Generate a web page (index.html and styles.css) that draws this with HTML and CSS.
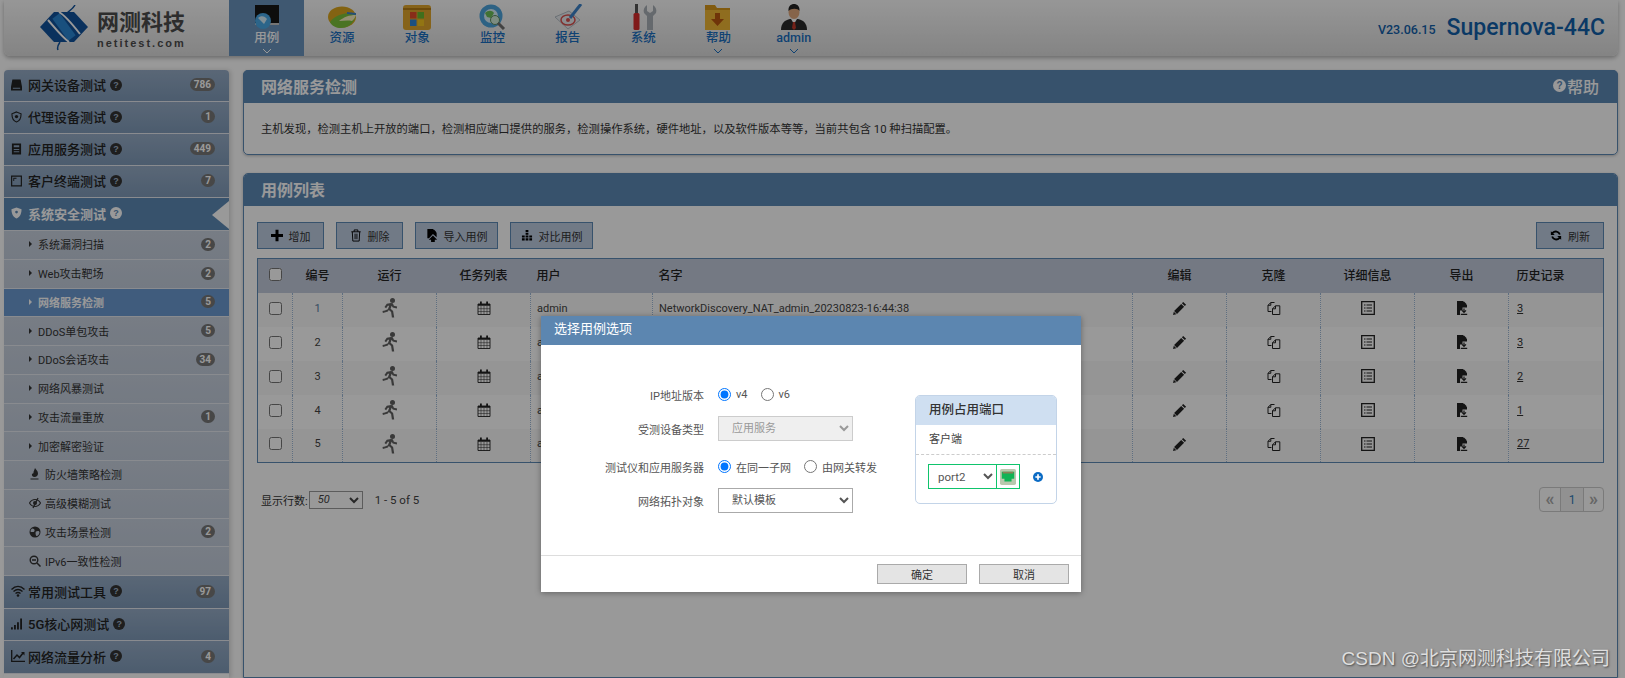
FILE: index.html
```html
<!DOCTYPE html>
<html lang="zh-CN">
<head>
<meta charset="utf-8">
<title>网络服务检测</title>
<link rel="stylesheet" href="styles.css">
</head>
<body>
<svg class="defs" aria-hidden="true">
  <symbol id="i-run" viewBox="0 0 16 20"><circle cx="10.500" cy="2.500" r="2.500"/><path d="M9 5 4.800 5.800 2.500 9l1.600 1.200 1.800-2.400 1.300-.1-1.300 3.600-3 1.300L.5 13l.4 2 5-1.600.9-1.300 2.300 2 .8 5.400h2.300l-1.100-6.600-2.500-2.200 1-2.900 1.200 1.700 4 .9.3-1.900-3.200-.7L10.800 5.300z"/></symbol>
  <symbol id="i-cal" viewBox="0 0 14 14"><path d="M1 3h12v10.500H1z" fill="none" stroke="currentColor" stroke-width=".9"/><path d="M1 3h12v1.800H1zM3 .5h1.800v3H3zM9.200 .5H11v3H9.200z"/><path d="M4 5v8.500M7 5v8.500M10 5v8.500M1 7.700h12M1 10.500h12" fill="none" stroke="currentColor" stroke-width=".5"/></symbol>
  <symbol id="i-pen" viewBox="0 0 14 14"><path d="M10.200 .9 13.100 3.800 11.800 5.100 8.900 2.200zM8.200 2.900 11.100 5.800 4 12.900 1.100 10z"/><path d="M.8 10.700 3.300 13.200 0 14z"/></symbol>
  <symbol id="i-clone" viewBox="0 0 14 14"><path d="M7.500 1.500H3.800L1 4.300v6.200h3.500M3.800 1.500v2.800H1M12.800 4.800H8.500L5.500 7.800v5.700h7.300zM8.500 4.800v3H5.500" fill="none" stroke="currentColor"/></symbol>
  <symbol id="i-list" viewBox="0 0 14 14"><path d="M.7.700h12.600v12.600H.7z" fill="none" stroke="currentColor" stroke-width="1.300"/><path d="M3 3.500h1.500v1H3zM5.500 3.500H11v1H5.500zM3 6.500h1.500v1H3zM5.500 6.500H11v1H5.500zM3 9.500h1.500v1H3zM5.500 9.500H11v1H5.500z"/></symbol>
  <symbol id="i-exp" viewBox="0 0 12 14"><path d="M1 0h6l4 4v2.500H6.500V9.500H4V14H1zM8 .5 10.500 3H8z"/><path d="M8 7.500v3.500M6 9.300l2 2 2-2M4.800 13.300h6.400" fill="none" stroke="currentColor" stroke-width="1.200"/></symbol>
  <symbol id="i-plus" viewBox="0 0 12 12"><path d="M4.500 0h3v4.500H12v3H7.500V12h-3V7.500H0v-3h4.500z"/></symbol>
</svg>

<header class="topbar">
  <div class="brand">
    <svg class="brand-mark" viewBox="0 0 50 46">
      <path d="M0 22 14 7H34L48 22 34 37H14z" fill="#12539c"/>
      <path d="M16 11 32 33" stroke="#2a86d2" stroke-width="9" fill="none"/>
      <path d="M19 7C26 11 33 20 40 29" stroke="#fff" stroke-width="2" fill="none"/>
      <path d="M8 15C15 23 22 32 29 37" stroke="#fff" stroke-width="2" fill="none"/>
      <path d="M35 0C33 4 29 6 27 8M20 37C18 40 17 43 18 45" stroke="#12539c" stroke-width="1.500" fill="none"/>
    </svg>
    <div class="brand-text">
      <span class="brand-cn">网测科技</span>
      <span class="brand-en">netitest.com</span>
    </div>
  </div>
  <nav class="tabs">
    <a class="tab tab-on">
      <svg class="tab-icon" viewBox="0 0 30 26"><path d="M3 1h24v18H3z" fill="#161616"/><path d="M3 19h24v2H3z" fill="#c4c4c4"/><circle cx="11" cy="17" r="8" fill="#4aa8e6"/><path d="M6 14c3-3 7-2 9 1l-3 5z" fill="#d6eefb"/></svg>
      <span>用例</span><svg class="chev" viewBox="0 0 10 6"><path d="M1 1l4 4 4-4" fill="none" stroke="currentColor"/></svg>
    </a>
    <a class="tab">
      <svg class="tab-icon" viewBox="0 0 30 26"><ellipse cx="15" cy="13" rx="14" ry="10.500" fill="#dba61e"/><path d="M3 18C9 10 20 8 29 10 28 18 22 24 14 24 9 24 5 22 3 18z" fill="#7cc23a"/><path d="M12 17c5-4 10-6 17-6-1 3-2 4-4 6-5-1-9 0-13 0z" fill="#f7efc0"/><path d="M20 8l9 1v2l-9-1z" fill="#3d83c9"/></svg>
      <span>资源</span>
    </a>
    <a class="tab">
      <svg class="tab-icon" viewBox="0 0 30 26"><rect x="1" y="1" width="28" height="25" rx="3" fill="#e0a52c"/><path d="M1 5h28" stroke="#b67d14" stroke-width="2"/><path d="M8 8h6.500v6.500H8z" fill="#e34a2a"/><path d="M15.500 8H22v6.500h-6.500z" fill="#69b92f"/><path d="M8 15.500h6.500V22H8z" fill="#2f86d6"/><path d="M15.500 15.500H22V22h-6.500z" fill="#f4c320"/></svg>
      <span>对象</span>
    </a>
    <a class="tab">
      <svg class="tab-icon" viewBox="0 0 30 26"><circle cx="13" cy="12" r="11.500" fill="#4ba3dc"/><circle cx="13" cy="12" r="7" fill="#d8eef9"/><path d="M7 9c3-3 7-3 9 0l-3 5-4-1z" fill="#6cbf57"/><circle cx="17" cy="16" r="4.500" fill="#cfe9d6" stroke="#5f8d60"/><path d="M20 19l6 6" stroke="#6f6f6f" stroke-width="3"/></svg>
      <span>监控</span>
    </a>
    <a class="tab">
      <svg class="tab-icon" viewBox="0 0 30 26"><path d="M2 13 16 7l11 9-12 9z" fill="#e8ecef" stroke="#b4bcc4"/><ellipse cx="15" cy="16" rx="7" ry="5" fill="none" stroke="#d8504e" stroke-width="1.500"/><circle cx="15" cy="16" r="2" fill="#d8504e"/><path d="M28 0 17 14" stroke="#3d83c9" stroke-width="3"/></svg>
      <span>报告</span>
    </a>
    <a class="tab">
      <svg class="tab-icon" viewBox="0 0 30 26"><path d="M7 0h3v9H7z" fill="#555"/><rect x="5.500" y="9" width="6" height="17" rx="1.500" fill="#d62c2c"/><path d="M19 1v6l3 2 3-2V1c3 2 4 5 3 8l-3 3v14h-6V12l-3-3c-1-3 0-6 3-8z" fill="#a9b0b6"/></svg>
      <span>系统</span>
    </a>
    <a class="tab">
      <svg class="tab-icon" viewBox="0 0 30 26"><path d="M2 1h10l2 3h13v22H2z" fill="#d8981c"/><path d="M2 6h25v20H2z" fill="#efb635"/><path d="M12 9h5v6h4l-6.500 7L8 15h4z" fill="#b9580f"/></svg>
      <span>帮助</span><svg class="chev" viewBox="0 0 10 6"><path d="M1 1l4 4 4-4" fill="none" stroke="currentColor"/></svg>
    </a>
    <a class="tab">
      <svg class="tab-icon" viewBox="0 0 30 26"><ellipse cx="15" cy="8" rx="5.500" ry="7" fill="#e0a77c"/><path d="M9.500 7C9 1 13 0 15 0s6 1 5.500 7C19 4 12 4 9.500 7z" fill="#222"/><path d="M2 26c0-7 4-10 9-11h8c5 1 9 4 9 11z" fill="#2a2a2a"/><path d="M12 15h6l-3 5z" fill="#fff"/><path d="M14 18h2l1 6-2 2-2-2z" fill="#c0392b"/></svg>
      <span>admin</span><svg class="chev" viewBox="0 0 10 6"><path d="M1 1l4 4 4-4" fill="none" stroke="currentColor"/></svg>
    </a>
  </nav>
  <div class="product">
    <span class="version">V23.06.15</span>
    <span class="model">Supernova-44C</span>
  </div>
</header>

<div class="layout">
  <aside class="side">
    <a class="group"><svg class="g-ico" viewBox="0 0 12 12"><path d="M1.500 0h9L12 8v4H0V8zM2 9v1h8V9z"/></svg><span>网关设备测试</span><i class="help">?</i><b class="badge">786</b></a>
    <a class="group"><svg class="g-ico" viewBox="0 0 12 12"><path d="M6 .5 11 2.500c0 5-2 8-5 9-3-1-5-4-5-9z" fill="none" stroke="currentColor" stroke-width="1.200"/><circle cx="6" cy="5.500" r="1.800"/></svg><span>代理设备测试</span><i class="help">?</i><b class="badge">1</b></a>
    <a class="group"><svg class="g-ico" viewBox="0 0 12 12"><path d="M1 0h10v12H1zM3 2v2h6V2zM3 6v1h6V6zM3 8.500v1h6v-1z"/></svg><span>应用服务测试</span><i class="help">?</i><b class="badge">449</b></a>
    <a class="group"><svg class="g-ico" viewBox="0 0 12 12"><path d="M.7.700h10.600v10.600H.7z" fill="none" stroke="currentColor" stroke-width="1.300"/><path d="M2.500 2.500h3.500v1H3.500V6h-1z"/></svg><span>客户终端测试</span><i class="help">?</i><b class="badge">7</b></a>
    <a class="group group-on tall"><svg class="g-ico" viewBox="0 0 12 12"><path d="M6 0 11.500 2c0 6-2.500 8.800-5.500 10C3 10.800.5 8 .5 2z"/><circle cx="6" cy="5" r="1.500" fill="#5d89b5"/></svg><span>系统安全测试</span><i class="help">?</i></a>
    <a class="sub"><i class="caret"></i><span>系统漏洞扫描</span><b class="badge">2</b></a>
    <a class="sub"><i class="caret"></i><span>Web攻击靶场</span><b class="badge">2</b></a>
    <a class="sub sub-on"><i class="caret"></i><span>网络服务检测</span><b class="badge">5</b></a>
    <a class="sub"><i class="caret"></i><span>DDoS单包攻击</span><b class="badge">5</b></a>
    <a class="sub"><i class="caret"></i><span>DDoS会话攻击</span><b class="badge">34</b></a>
    <a class="sub"><i class="caret"></i><span>网络风暴测试</span></a>
    <a class="sub"><i class="caret"></i><span>攻击流量重放</span><b class="badge">1</b></a>
    <a class="sub"><i class="caret"></i><span>加密解密验证</span></a>
    <a class="sub"><svg class="s-ico" viewBox="0 0 12 12"><path d="M6 0c1 2 3 3 3 5.500C9 7.500 7.500 9 5.500 9S2.500 7.500 3 5.500C4 6 4.500 5.500 4.500 4.500 4.500 3 5.500 2 6 0zM1.500 10.500h8v1h-8z"/></svg><span>防火墙策略检测</span></a>
    <a class="sub"><svg class="s-ico" viewBox="0 0 12 12"><path d="M.5 6C2 3.500 4 2.500 6 2.500S10 3.500 11.500 6C10 8.500 8 9.500 6 9.500S2 8.500.5 6z" fill="none" stroke="currentColor" stroke-width="1.200"/><circle cx="6" cy="6" r="2"/><path d="M9 1 4 11" stroke="currentColor" stroke-width="1.200"/></svg><span>高级模糊测试</span></a>
    <a class="sub"><svg class="s-ico" viewBox="0 0 12 12"><circle cx="6" cy="6" r="5.500"/><path d="M3 2.500c2 0 3 1 2.500 2.500S3 6 2 6 1.500 3.500 3 2.500zM7 5.500c2-1 3.500-.5 3.500 1S9 9.500 8 10 6 7 7 5.500z" fill="#c4cedc"/></svg><span>攻击场景检测</span><b class="badge">2</b></a>
    <a class="sub"><svg class="s-ico" viewBox="0 0 12 12"><circle cx="5" cy="5" r="3.800" fill="none" stroke="currentColor" stroke-width="1.400"/><path d="M3 5h4M8 8l3.500 3.500" stroke="currentColor" stroke-width="1.500"/></svg><span>IPv6一致性检测</span></a>
    <a class="group tall"><svg class="g-ico wide" viewBox="0 0 14 12"><path d="M.5 4.500C4.500 .5 9.500 .5 13.500 4.500M2.500 6.500c3-2.700 6-2.700 9 0M4.500 8.500c1.700-1.400 3.300-1.400 5 0" fill="none" stroke="currentColor" stroke-width="1.400"/><circle cx="7" cy="10.500" r="1.300"/></svg><span>常用测试工具</span><i class="help">?</i><b class="badge">97</b></a>
    <a class="group"><svg class="g-ico" viewBox="0 0 12 12"><path d="M0 9.500h2V12H0zM3.300 7h2v5h-2zM6.600 4h2v8h-2zM10 0h2v12h-2z"/></svg><span>5G核心网测试</span><i class="help">?</i></a>
    <a class="group tall"><svg class="g-ico wide" viewBox="0 0 14 12"><path d="M.7 0v11.300H14" fill="none" stroke="currentColor" stroke-width="1.300"/><path d="M2.500 9 6 5l2.500 2.500L12 3" fill="none" stroke="currentColor" stroke-width="1.500"/><path d="M10 2h3.500v3.500z"/></svg><span>网络流量分析</span><i class="help">?</i><b class="badge">4</b></a>
  </aside>

  <main class="content">
    <section class="panel panel-intro">
      <h2 class="panel-head"><span>网络服务检测</span><a class="head-help"><i class="help help-light">?</i>帮助</a></h2>
      <p class="intro">主机发现，检测主机上开放的端口，检测相应端口提供的服务，检测操作系统，硬件地址，以及软件版本等等，当前共包含 10 种扫描配置。</p>
    </section>

    <section class="panel panel-list">
      <h2 class="panel-head"><span>用例列表</span></h2>
      <div class="panel-body">
        <div class="toolbar">
          <button class="btn"><svg class="b-ico" viewBox="0 0 12 12"><use href="#i-plus"/></svg>增加</button>
          <button class="btn"><svg class="b-ico" viewBox="0 0 12 14"><path d="M1 3h10M4 3V1h4v2M2 3l.6 10h6.800L10 3M5 5v6M7 5v6" fill="none" stroke="currentColor"/></svg>删除</button>
          <button class="btn btn-long"><svg class="b-ico" viewBox="0 0 12 14"><path d="M1 0h6l4 4v5L7 5.500 2.800 10H1zM8 .5 10.500 3H8z"/><path d="M7 7 2.500 11.500H5V14h4v-2.500h2.500z"/></svg>导入用例</button>
          <button class="btn btn-long"><svg class="b-ico" viewBox="0 0 13 12"><path d="M5 0h3v2.300H5zM5 3h3v2.300H5zM1 6h3v2.300H1zM5 6h3v2.300H5zM9 6h3v2.300H9zM1 9h3v2.300H1zM5 9h3v2.300H5zM9 9h3v2.300H9z"/></svg>对比用例</button>
          <button class="btn btn-end"><svg class="b-ico" viewBox="0 0 14 14"><path d="M12.500 5.500A6 6 0 0 0 2.300 3.300L1 2v4.500h4.500L3.800 4.800A4 4 0 0 1 10.500 6zM1.500 8.500a6 6 0 0 0 10.200 2.200L13 12V7.500H8.500l1.700 1.700A4 4 0 0 1 3.500 8z"/></svg>刷新</button>
        </div>
        <table class="grid">
          <colgroup>
            <col class="c-check"><col class="c-num"><col class="c-icon"><col class="c-icon"><col class="c-user"><col><col class="c-icon"><col class="c-icon"><col class="c-icon"><col class="c-icon"><col class="c-last">
          </colgroup>
          <thead>
            <tr><th><input type="checkbox"></th><th>编号</th><th>运行</th><th>任务列表</th><th class="left">用户</th><th class="left">名字</th><th>编辑</th><th>克隆</th><th>详细信息</th><th>导出</th><th class="left end">历史记录</th></tr>
          </thead>
          <tbody>
            <tr><td><input type="checkbox"></td><td class="num-first">1</td><td><svg class="t-run"><use href="#i-run"/></svg></td><td><svg class="t-ico"><use href="#i-cal"/></svg></td><td class="left">admin</td><td class="left">NetworkDiscovery_NAT_admin_20230823-16:44:38</td><td><svg class="t-ico"><use href="#i-pen"/></svg></td><td><svg class="t-ico"><use href="#i-clone"/></svg></td><td><svg class="t-ico"><use href="#i-list"/></svg></td><td><svg class="t-ico"><use href="#i-exp"/></svg></td><td class="left end"><a class="hist">3</a></td></tr>
            <tr><td><input type="checkbox"></td><td>2</td><td><svg class="t-run"><use href="#i-run"/></svg></td><td><svg class="t-ico"><use href="#i-cal"/></svg></td><td class="left">admin</td><td class="left"></td><td><svg class="t-ico"><use href="#i-pen"/></svg></td><td><svg class="t-ico"><use href="#i-clone"/></svg></td><td><svg class="t-ico"><use href="#i-list"/></svg></td><td><svg class="t-ico"><use href="#i-exp"/></svg></td><td class="left end"><a class="hist">3</a></td></tr>
            <tr><td><input type="checkbox"></td><td>3</td><td><svg class="t-run"><use href="#i-run"/></svg></td><td><svg class="t-ico"><use href="#i-cal"/></svg></td><td class="left">admin</td><td class="left"></td><td><svg class="t-ico"><use href="#i-pen"/></svg></td><td><svg class="t-ico"><use href="#i-clone"/></svg></td><td><svg class="t-ico"><use href="#i-list"/></svg></td><td><svg class="t-ico"><use href="#i-exp"/></svg></td><td class="left end"><a class="hist">2</a></td></tr>
            <tr><td><input type="checkbox"></td><td>4</td><td><svg class="t-run"><use href="#i-run"/></svg></td><td><svg class="t-ico"><use href="#i-cal"/></svg></td><td class="left">admin</td><td class="left"></td><td><svg class="t-ico"><use href="#i-pen"/></svg></td><td><svg class="t-ico"><use href="#i-clone"/></svg></td><td><svg class="t-ico"><use href="#i-list"/></svg></td><td><svg class="t-ico"><use href="#i-exp"/></svg></td><td class="left end"><a class="hist">1</a></td></tr>
            <tr><td><input type="checkbox"></td><td>5</td><td><svg class="t-run"><use href="#i-run"/></svg></td><td><svg class="t-ico"><use href="#i-cal"/></svg></td><td class="left">admin</td><td class="left"></td><td><svg class="t-ico"><use href="#i-pen"/></svg></td><td><svg class="t-ico"><use href="#i-clone"/></svg></td><td><svg class="t-ico"><use href="#i-list"/></svg></td><td><svg class="t-ico"><use href="#i-exp"/></svg></td><td class="left end"><a class="hist">27</a></td></tr>
          </tbody>
        </table>
        <div class="pagerow">
          <label class="rows">显示行数:<select class="rows-select"><option>50</option></select></label>
          <span class="range">1 - 5 of 5</span>
          <div class="pager"><a class="pg pg-arrow">«</a><a class="pg pg-cur">1</a><a class="pg pg-arrow">»</a></div>
        </div>
      </div>
    </section>
  </main>
</div>

<div class="overlay"></div>

<div class="modal">
  <div class="modal-head">选择用例选项</div>
  <div class="modal-body">
    <form class="form">
      <div class="field"><span class="flabel">IP地址版本</span><label class="opt"><input type="radio" name="ip" checked>v4</label><label class="opt"><input type="radio" name="ip">v6</label></div>
      <div class="field field-gap"><span class="flabel">受测设备类型</span><select class="fselect" disabled><option>应用服务</option></select></div>
      <div class="field"><span class="flabel">测试仪和应用服务器</span><label class="opt"><input type="radio" name="net" checked>在同一子网</label><label class="opt"><input type="radio" name="net">由网关转发</label></div>
      <div class="field"><span class="flabel">网络拓扑对象</span><select class="fselect"><option>默认模板</option></select></div>
    </form>
    <div class="ports">
      <div class="ports-head">用例占用端口</div>
      <div class="ports-role">客户端</div>
      <div class="ports-row">
        <select class="port-select"><option>port2</option></select>
        <span class="port-cell"><svg class="port-ico" viewBox="0 0 18 18"><rect width="18" height="18" rx="2" fill="#b9c9ae"/><path d="M2 3h14v8h-3v3H5v-3H2z" fill="#0fb455"/><path d="M3 3h12v2H3z" fill="#8a7f55"/></svg></span>
        <svg class="port-add" viewBox="0 0 12 12"><circle cx="6" cy="6" r="6" fill="#0b6bc4"/><path d="M5 2.800h2V5h2.200v2H7v2.200H5V7H2.800V5H5z" fill="#fff"/></svg>
      </div>
    </div>
  </div>
  <div class="modal-foot">
    <button class="mbtn">确定</button>
    <button class="mbtn">取消</button>
  </div>
</div>

<div class="watermark">CSDN @北京网测科技有限公司</div>
</body>
</html>
```

FILE: styles.css
```css
* { box-sizing: border-box; }
html, body { margin: 0; height: 678px; overflow: hidden; }
body {
  position: relative;
  background: #fff;
  color: #333;
  font: 12px Roboto, "Noto Sans CJK SC", sans-serif;
}
a { color: inherit; text-decoration: none; }
.defs { position: absolute; width: 0; height: 0; }

/* top bar */
.topbar {
  display: flex;
  height: 56px;
  margin: 0 7px 0 4px;
  background: linear-gradient(#fbfbfb, #dcdcdc);
  border-radius: 0 0 6px 6px;
  box-shadow: 0 2px 4px rgba(0, 0, 0, .3);
}
.brand { display: flex; width: 225px; padding: 5px 0 0 36px; gap: 7px; }
.brand-mark { width: 50px; height: 46px; flex: none; }
.brand-text { display: flex; flex-direction: column; padding-top: 4px; }
.brand-cn { font-size: 22px; line-height: 28px; font-weight: 700; color: #4c4c4c; white-space: nowrap; }
.brand-en { font: 700 11px/12px "Liberation Sans", sans-serif; letter-spacing: 2px; color: #4c4c4c; }
.tabs { display: flex; }
.tab {
  display: flex;
  flex-direction: column;
  align-items: center;
  width: 75.3px;
  padding-top: 4px;
  color: #1a6fc0;
  font-size: 12.500px;
  line-height: 15px;
  font-weight: 500;
}
.tab-on { background: #6a93bd; color: #fff; }
.tab-icon { width: 30px; height: 26px; flex: none; }
.chev { width: 10px; height: 6px; margin-top: 3px; }
.product { display: flex; align-items: center; gap: 11px; margin-left: auto; padding: 0 13px 2px 0; color: #125fa9; }
.version { font-size: 12.500px; font-weight: 500; padding-top: 5px; }
.model { font-size: 23px; font-weight: 500; }

/* two columns */
.layout { display: flex; gap: 14px; padding: 14px 7px 0 4px; }
.side { width: 225px; flex: none; box-shadow: 2px 0 4px rgba(0, 0, 0, .15); border-radius: 4px 4px 0 0; overflow: hidden; }
.group, .sub { position: relative; display: flex; align-items: center; white-space: nowrap; border-bottom: 1px solid #e4e8ee; }
.group {
  height: 32px;
  padding: 0 14px 2px 7px;
  background: linear-gradient(#96acc6, #7f9ab8);
  color: #222;
  font-size: 13px;
  font-weight: 500;
}
.tall { height: 33px; }
.group-on { background: #5d89b5; color: #fff; font-weight: 700; }
.group-on::after {
  content: "";
  position: absolute;
  top: 3px;
  right: 0;
  border: 14px solid transparent;
  border-left: 0;
  border-right: 17px solid #fff;
}
.g-ico { width: 11px; height: 12px; margin-right: 6px; fill: currentColor; flex: none; }
.wide { width: 14px; margin: 0 3px 0 0; }
.sub {
  height: 28.750px;
  padding: 0 14px 1px 25px;
  background: linear-gradient(#c7d0de, #c2ccda);
  color: #333;
  font-size: 11px;
}
.sub-on { background: #6c9ad0; color: #fff; font-weight: 700; }
.caret { width: 0; height: 0; margin-right: 6px; border: 3.500px solid transparent; border-left: 3.500px solid currentColor; border-right: 0; }
.s-ico { width: 12px; height: 12px; margin-right: 4px; fill: currentColor; flex: none; }
.help {
  display: inline-flex;
  align-items: center;
  justify-content: center;
  width: 12px;
  height: 12px;
  margin-left: 4px;
  border-radius: 50%;
  background: #333;
  color: #9fb2c8;
  font: 700 9px/12px "Liberation Sans", sans-serif;
}
.group-on .help { background: #fff; color: #5d89b5; }
.badge {
  margin-left: auto;
  min-width: 13px;
  height: 13px;
  padding: 0 4px;
  border-radius: 7px;
  background: #777;
  color: #fff;
  font: 700 10px/13px Roboto, sans-serif;
  text-align: center;
}
.sub .badge, .group .badge { flex: none; }

/* panels */
.content { flex: 1; min-width: 0; }
.panel { border: 1px solid #5d89b5; border-radius: 5px 5px 0 0; box-shadow: 0 1px 3px rgba(0, 0, 0, .25); }
.panel-intro { height: 85px; margin-bottom: 18px; border-radius: 5px; }
.panel-head {
  display: flex;
  justify-content: space-between;
  align-items: center;
  height: 33px;
  margin: -1px -1px 0;
  padding: 0 19px 2px 18px;
  background: #5d89b5;
  border-radius: 5px 5px 0 0;
  color: #fff;
  font-size: 16px;
  font-weight: 700;
}
.head-help { display: inline-flex; align-items: center; font-weight: 500; }
.help-light { width: 13px; height: 13px; margin: 0 1px 0 0; background: #fff; color: #5d89b5; font-size: 10px; }
.intro { margin: 20px 0 0 17px; color: #333; font-size: 11.300px; line-height: 14px; }
.panel-list { height: 505px; overflow: hidden; }
.panel-body { padding: 16px 13px 0; }

/* toolbar */
.toolbar { display: flex; gap: 12px; height: 27px; }
.btn {
  display: inline-flex;
  align-items: center;
  justify-content: center;
  gap: 6px;
  width: 67px;
  height: 27px;
  padding: 0;
  border: 1px solid #5d89b5;
  background: #bdcbe0;
  color: #333;
  font: 11px Roboto, "Noto Sans CJK SC", sans-serif;
}
.btn-long { width: 83px; }
.btn-end { width: 68px; margin-left: auto; }
.b-ico { width: 12px; height: 13px; fill: #000; color: #000; flex: none; }

/* table */
.grid {
  width: 100%;
  margin-top: 9px;
  border-collapse: collapse;
  table-layout: fixed;
  border: 1px solid #5d89b5;
}
.c-check { width: 35px; }
.c-num { width: 50px; }
.c-icon { width: 94px; }
.c-last { width: 95px; }
.c-user { width: 122px; }
.grid th {
  height: 34px;
  padding: 0 0 2px;
  background: #c2cadb;
  color: #222;
  font-size: 12px;
  font-weight: 500;
}
.grid td {
  height: 34px;
  padding: 0 0 3px;
  text-align: center;
  color: #444;
  font-size: 11px;
  border-left: 1px dotted #9db8d6;
  white-space: nowrap;
  overflow: hidden;
}
.grid td:first-child { border-left: 0; }
.grid tbody tr:nth-child(odd) { background: #f8f8f8; }
.grid tbody tr:nth-child(even) { background: #ffffff; }
.grid .left { text-align: left; padding-left: 6px; }
.grid .end { padding-left: 8px; }
.grid input { display: block; margin: 0 auto; }
.num-first { color: #5a7ea3 !important; }
.t-run { width: 16px; height: 20px; display: inline-block; vertical-align: middle; fill: #606060; }
.t-ico { width: 14px; height: 14px; display: inline-block; vertical-align: middle; fill: #222; color: #222; }
.hist { color: #333; text-decoration: underline; }

/* pagination row */
.pagerow { display: flex; align-items: center; height: 25px; margin-top: 24px; padding-left: 4px; color: #333; font-size: 11px; }
.rows { display: flex; align-items: center; gap: 1px; white-space: nowrap; }
.rows-select {
  width: 54px;
  height: 18px;
  padding: 0 0 0 4px;
  border: 1px solid #999;
  border-radius: 0;
  background: #fff;
  color: #444;
  font: italic 11px Roboto, sans-serif;
}
.range { margin-left: 12px; font-size: 11.500px; color: #444; }
.pager { display: flex; margin-left: auto; height: 25px; border: 1px solid #ccc; border-radius: 4px; overflow: hidden; }
.pg { display: flex; align-items: center; justify-content: center; border-left: 1px solid #ccc; font-size: 12px; }
.pg:first-child { border-left: 0; }
.pg-arrow { width: 20px; color: #aaa; font-size: 18px; font-weight: 700; padding-bottom: 3px; }
.pg-cur { width: 23px; background: #f2f2f2; color: #337ab7; }

/* modal */
.overlay { position: absolute; inset: 0; background: rgba(0, 0, 0, .4); }
.modal {
  position: absolute;
  left: 541px;
  top: 316px;
  width: 540px;
  height: 276px;
  display: flex;
  flex-direction: column;
  background: #fff;
  box-shadow: 0 1px 6px rgba(0, 0, 0, .35);
}
.modal-head { height: 29px; padding: 0 13px; background: #5c86b0; color: #fff; font-size: 13px; line-height: 26px; flex: none; }
.modal-body { position: relative; display: flex; flex: 1; min-height: 0; border-bottom: 1px solid #ddd; }
.form { display: flex; flex-direction: column; width: 374px; padding-top: 37px; }
.field { display: flex; align-items: center; height: 25px; margin-bottom: 9px; color: #555; font-size: 11px; }
.field-gap { margin-bottom: 13px; }
.flabel { width: 163px; margin-right: 14px; text-align: right; white-space: nowrap; }
.opt { display: inline-flex; align-items: center; margin-right: 13px; white-space: nowrap; }
.opt input { margin: 0 5px 0 0; flex: none; }
.fselect {
  width: 135px;
  height: 25px;
  padding: 0 0 0 9px;
  border: 1px solid #aaa;
  border-radius: 0;
  background: #fff;
  color: #555;
  font: 11px Roboto, "Noto Sans CJK SC", sans-serif;
}
.fselect:disabled { background: #efefef; border-color: #ccc; color: #999; opacity: 1; }
.ports { width: 142px; height: 109px; margin: 50px 0 0 0; border: 1px solid #c3d4e8; border-radius: 5px; overflow: hidden; }
.ports-head { height: 29px; padding-left: 13px; background: #cfdff1; color: #333; font-size: 12.500px; font-weight: 500; line-height: 27px; }
.ports-role { height: 30px; padding-left: 13px; border-bottom: 1px dashed #ccc; color: #444; font-size: 11px; line-height: 29px; }
.ports-row { display: flex; align-items: center; padding: 9px 0 0 12px; }
.port-select {
  width: 69px;
  height: 25px;
  padding: 0 0 0 5px;
  border: 1px solid #0fc46c;
  border-radius: 0;
  background: #fff;
  color: #555;
  font: 11.500px Roboto, sans-serif;
}
.port-cell { display: flex; align-items: center; justify-content: center; width: 24px; height: 25px; margin-left: -1px; border: 1px solid #0fc46c; }
.port-ico { width: 16px; height: 16px; }
.port-add { width: 10px; height: 10px; margin-left: 13px; }
.modal-foot { display: flex; justify-content: flex-end; gap: 12px; height: 36px; padding: 8px 12px 0 0; flex: none; }
.mbtn { width: 90px; height: 20px; padding: 0; border: 1px solid #aaa; background: #e4e4e4; color: #333; font: 11px "Noto Sans CJK SC", sans-serif; }

/* watermark */
.watermark {
  position: absolute;
  right: 15px;
  bottom: 8px;
  color: #dedede;
  font: 19px "Liberation Sans", "Noto Sans CJK SC", sans-serif;
  text-shadow: 1px 1px 2px rgba(0, 0, 0, .5);
  white-space: nowrap;
}
```
